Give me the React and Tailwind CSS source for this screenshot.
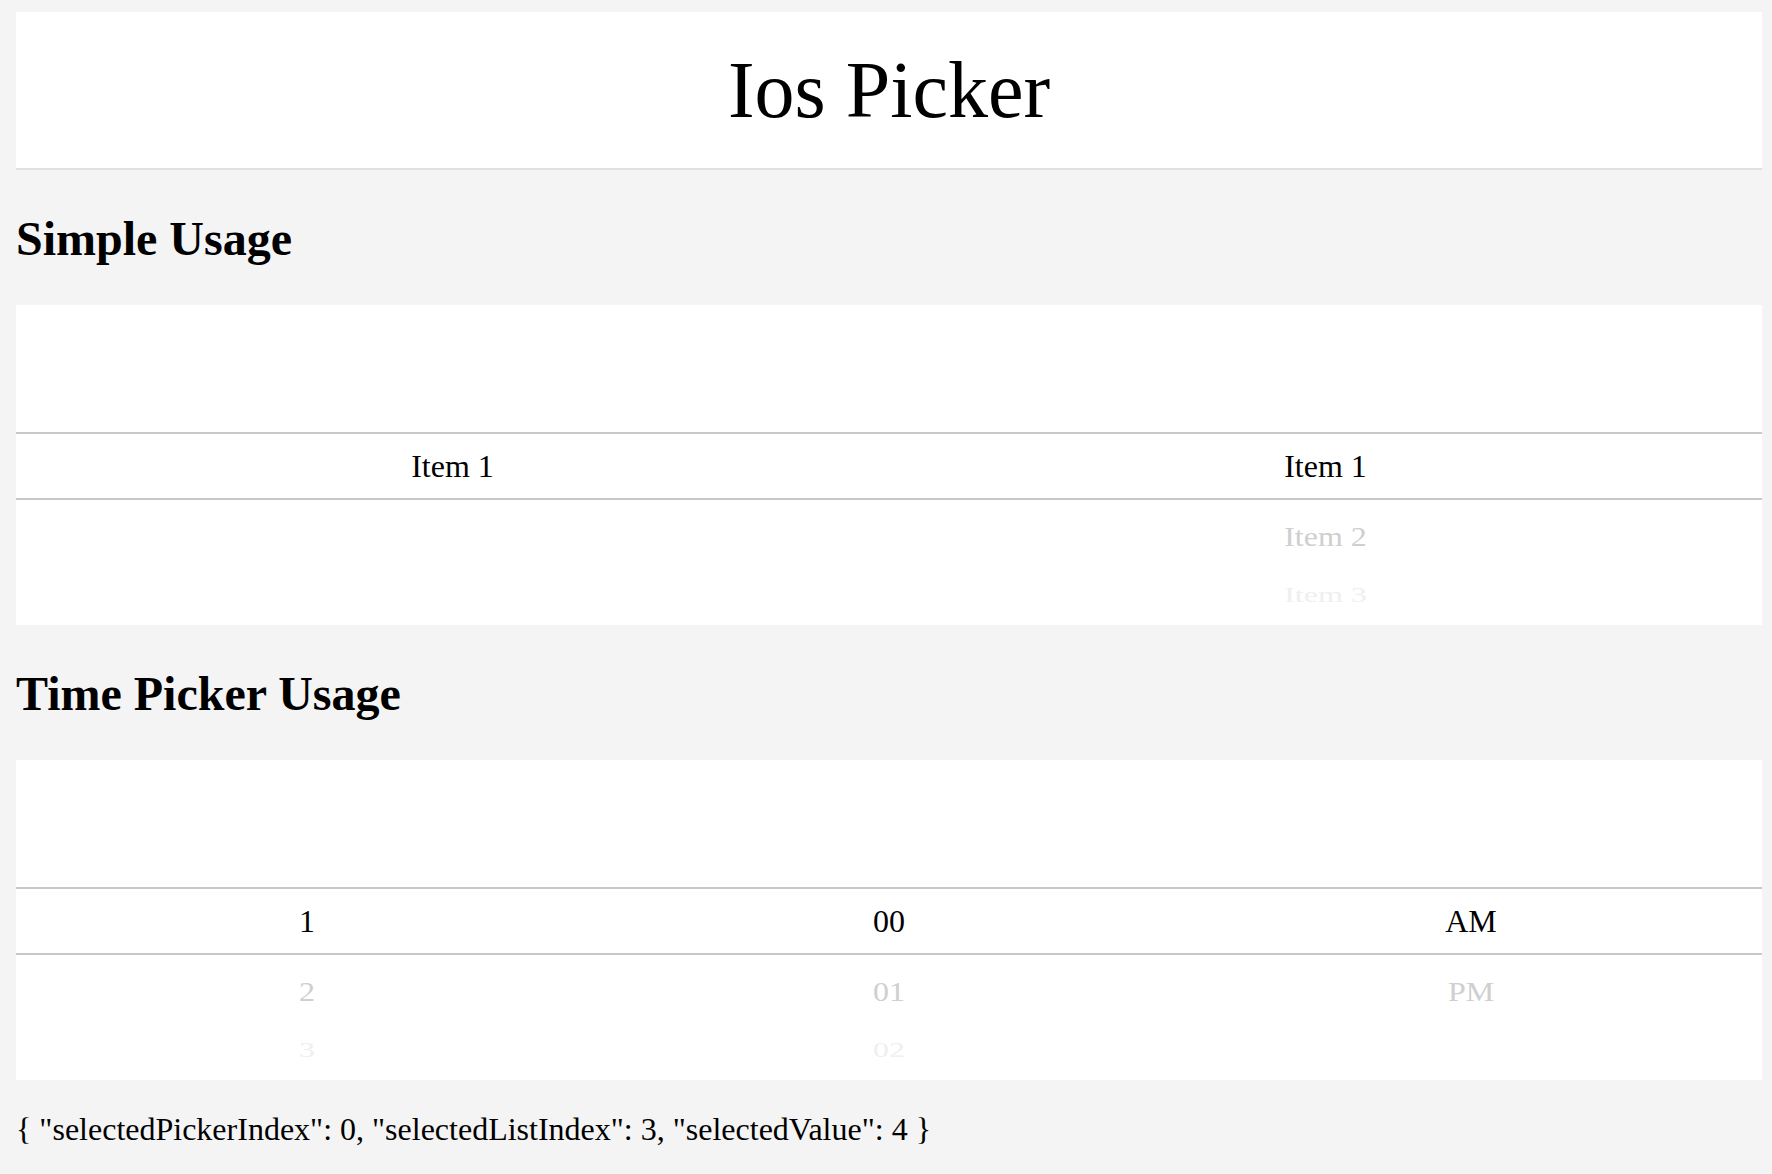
import React from "react";

const serif = "font-['Liberation_Serif','Times_New_Roman',serif]";

const PickerColumn = ({ items }) => {
  // first item is selected, the rest tilt away like an iOS wheel
  return (
    <div className="flex flex-col pt-[129px]">
      {items.map((item, i) => (
        <div
          key={item}
          className={
            i === 0
              ? "flex h-[64px] items-center justify-center text-[32px] leading-none text-black"
              : i === 1
              ? "flex h-[64px] translate-y-[6px] scale-y-[0.88] items-center justify-center text-[32px] leading-none text-[#cfcfcf]"
              : "flex h-[64px] translate-y-[1px] scale-y-[0.68] items-center justify-center text-[32px] leading-none text-[#efefef]"
          }
        >
          {item}
        </div>
      ))}
    </div>
  );
};

const Picker = ({ columns, cols }) => {
  return (
    <div className="relative h-[320px] overflow-hidden bg-white">
      <div className={`grid h-full ${cols}`}>
        {columns.map((items, i) => (
          <PickerColumn key={i} items={items} />
        ))}
      </div>
      <div className="pointer-events-none absolute inset-x-0 top-[127px] h-[68px] border-y-2 border-[#c8c7cc]" />
    </div>
  );
};

export default function App() {
  const state = { selectedPickerIndex: 0, selectedListIndex: 3, selectedValue: 4 };
  const json =
    "{ " +
    Object.entries(state)
      .map(([k, v]) => `"${k}": ${v}`)
      .join(", ") +
    " }";

  return (
    <div className={`min-h-screen bg-[#f4f4f4] pl-[16px] pr-[10px] pt-[12px] pb-[20px] ${serif}`}>
      <header className="flex h-[158px] items-center justify-center border-b-2 border-[#e0e0e0] bg-white">
        <h1 className="text-[80px] font-normal leading-none text-black">Ios Picker</h1>
      </header>

      <h2 className="mt-[45px] mb-[42px] text-[48px] font-bold leading-none text-black">Simple Usage</h2>
      <Picker cols="grid-cols-2" columns={[["Item 1"], ["Item 1", "Item 2", "Item 3"]]} />

      <h2 className="mt-[45px] mb-[42px] text-[48px] font-bold leading-none text-black">Time Picker Usage</h2>
      <Picker
        cols="grid-cols-3"
        columns={[
          ["1", "2", "3"],
          ["00", "01", "02"],
          ["AM", "PM"],
        ]}
      />

      <p className="mt-[33px] text-[32px] leading-none text-black">{json}</p>
    </div>
  );
}
